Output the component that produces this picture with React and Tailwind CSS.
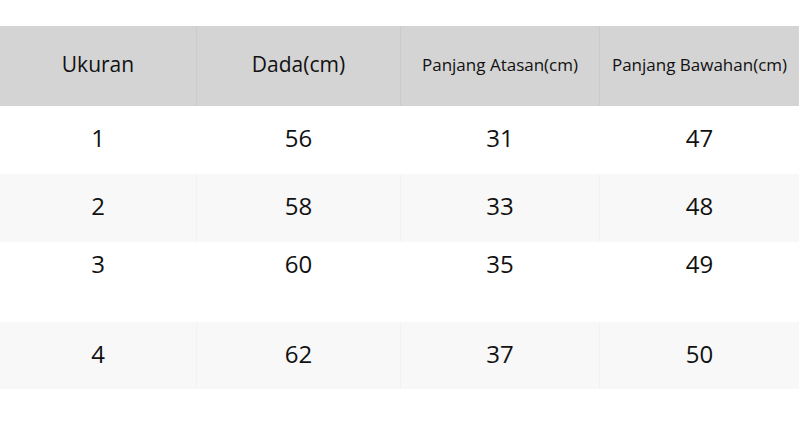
import React from 'react';

const headers = ['Ukuran', 'Dada(cm)', 'Panjang Atasan(cm)', 'Panjang Bawahan(cm)'];

const rows = [
  { cells: ['1', '56', '31', '47'], bg: 'bg-white', line: 'border-white', h: 'h-[68px]', align: 'items-center pb-[5px]' },
  { cells: ['2', '58', '33', '48'], bg: 'bg-[#f8f8f8]', line: 'border-[#f2f2f2]', h: 'h-[68px]', align: 'items-center pb-[5px]' },
  { cells: ['3', '60', '35', '49'], bg: 'bg-white', line: 'border-white', h: 'h-[80px]', align: 'items-start pt-[4px]' },
  { cells: ['4', '62', '37', '50'], bg: 'bg-[#f8f8f8]', line: 'border-[#f2f2f2]', h: 'h-[67px]', align: 'items-center pb-[4px]' },
];

const App = () => {
  return (
    <div
      className="w-[800px] h-[445px] bg-white pt-[26px] text-[#111]"
      style={{ fontFamily: '"Open Sans", "Noto Sans", sans-serif' }}
    >
      <div className="w-[799px]">
        <div className="grid grid-cols-[196px_204px_199px_200px] h-[80px] bg-[#d4d4d4]">
          {headers.map((h, i) => (
            <div
              key={h}
              className={`flex items-center justify-center pb-[3px] ${i > 0 ? 'border-l border-[#cbcbcb]' : ''} ${
                i < 2 ? 'text-[21px]' : 'text-[17px]'
              }`}
            >
              {h}
            </div>
          ))}
        </div>
        {rows.map((r, ri) => (
          <div key={ri} className={`grid grid-cols-[196px_204px_199px_200px] ${r.h} ${r.bg}`}>
            {r.cells.map((c, i) => (
              <div
                key={i}
                className={`flex justify-center text-[24px] ${r.align} ${i > 0 ? `border-l ${r.line}` : ''}`}
              >
                {c}
              </div>
            ))}
          </div>
        ))}
      </div>
    </div>
  );
};

export default App;
